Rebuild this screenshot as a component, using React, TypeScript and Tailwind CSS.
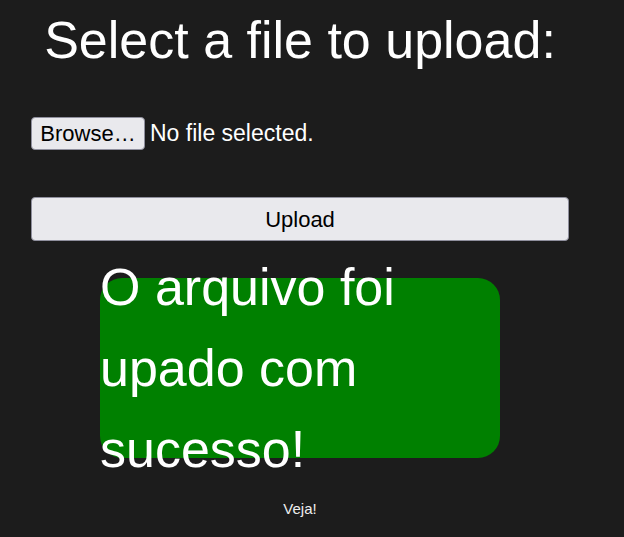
export default function App() {
  return (
    <div className="min-h-[537px] w-full bg-[#1c1c1c] text-white font-['Liberation_Sans',Arial,sans-serif]">
      <div className="flex w-[600px] flex-col">
        <h1 className="mt-[10px] text-center text-[52px] leading-[60px]">Select a file to upload:</h1>

        <form className="flex flex-col pl-[31px]" onSubmit={(e) => e.preventDefault()}>
          <div className="mt-[47px] flex items-center">
            <button
              type="button"
              className="h-[33px] w-[114px] rounded-[4px] border border-[#8f8f9d] bg-[#e9e9ed] text-[22px] leading-none text-black"
            >
              Browse…
            </button>
            <span className="ml-[5px] text-[23px] leading-none">No file selected.</span>
          </div>

          <button
            type="submit"
            className="mt-[47px] h-[44px] w-[538px] rounded-[4px] border border-[#8f8f9d] bg-[#e9e9ed] text-[22px] text-black"
          >
            Upload
          </button>
        </form>

        <div className="mx-auto mt-[37px] flex h-[180px] w-[400px] items-center rounded-[22px] bg-[#008000]">
          <p className="text-[52px] leading-[81px]">
            O arquivo foi
            <br />
            upado com
            <br />
            sucesso!
          </p>
        </div>

        <p className="mt-[40px] text-center text-[15px] text-[#eeeeee]">Veja!</p>
      </div>
    </div>
  );
}
